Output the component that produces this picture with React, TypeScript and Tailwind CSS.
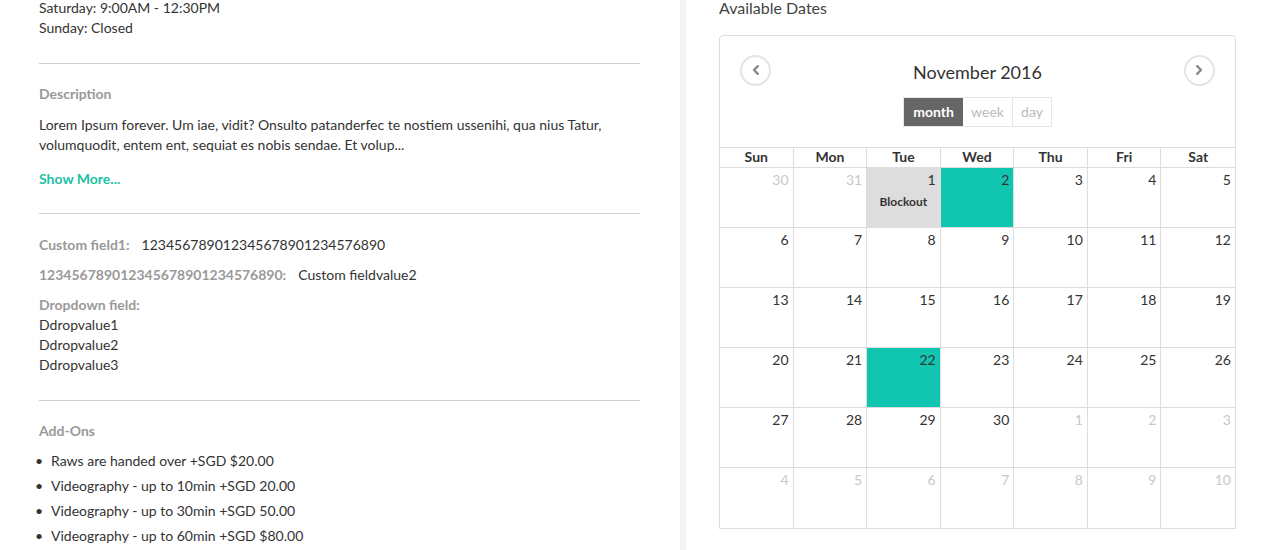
import React from "react";

type Cell = { n: number; other?: boolean; teal?: boolean; block?: boolean };

const rows: Cell[][] = [
  [{ n: 30, other: true }, { n: 31, other: true }, { n: 1, block: true }, { n: 2, teal: true }, { n: 3 }, { n: 4 }, { n: 5 }],
  [{ n: 6 }, { n: 7 }, { n: 8 }, { n: 9 }, { n: 10 }, { n: 11 }, { n: 12 }],
  [{ n: 13 }, { n: 14 }, { n: 15 }, { n: 16 }, { n: 17 }, { n: 18 }, { n: 19 }],
  [{ n: 20 }, { n: 21 }, { n: 22, teal: true }, { n: 23 }, { n: 24 }, { n: 25 }, { n: 26 }],
  [{ n: 27 }, { n: 28 }, { n: 29 }, { n: 30 }, { n: 1, other: true }, { n: 2, other: true }, { n: 3, other: true }],
  [{ n: 4, other: true }, { n: 5, other: true }, { n: 6, other: true }, { n: 7, other: true }, { n: 8, other: true }, { n: 9, other: true }, { n: 10, other: true }],
];

const days = ["Sun", "Mon", "Tue", "Wed", "Thu", "Fri", "Sat"];

const addons = [
  "Raws are handed over +SGD $20.00",
  "Videography - up to 10min +SGD 20.00",
  "Videography - up to 30min +SGD 50.00",
  "Videography - up to 60min +SGD $80.00",
];

function Chevron({ dir }: { dir: "left" | "right" }) {
  return (
    <svg width="12" height="12" viewBox="0 0 12 12">
      {dir === "left" ? (
        <path d="M7.8 2.2 L4 6 L7.8 9.8" fill="none" stroke="#8a8a8a" strokeWidth="2.4" strokeLinecap="round" strokeLinejoin="round" />
      ) : (
        <path d="M4.2 2.2 L8 6 L4.2 9.8" fill="none" stroke="#8a8a8a" strokeWidth="2.4" strokeLinecap="round" strokeLinejoin="round" />
      )}
    </svg>
  );
}

export default function App() {
  return (
    <div className="flex w-[1280px] h-[550px] overflow-hidden bg-white text-[14px] leading-[20px] text-[#333]" style={{ fontFamily: "Lato, 'Open Sans', sans-serif" }}>
      {/* Left column */}
      <div className="w-[680px] shrink-0 pl-[39px] pr-[40px]">
        <div className="-mt-[2px]">
          <div>Saturday: 9:00AM - 12:30PM</div>
          <div>Sunday: Closed</div>
        </div>
        <div className="mt-[25px] border-t border-[#cfcfcf]" />
        <div className="mt-[20px] font-bold text-[#999]">Description</div>
        <p className="mt-[11px] leading-[19.5px]">
          Lorem Ipsum forever. Um iae, vidit? Onsulto patanderfec te nostiem ussenihi, qua nius Tatur, volumquodit, entem ent, sequiat es nobis sendae. Et volup...
        </p>
        <div className="mt-[15px] font-bold text-[#1cc2a4]">Show More...</div>
        <div className="mt-[24px] border-t border-[#cfcfcf]" />
        <div className="mt-[21px]">
          <span className="font-bold text-[#999] mr-[12px]">Custom field1:</span>
          <span>123456789012345678901234576890</span>
        </div>
        <div className="mt-[10px]">
          <span className="font-bold text-[#999] mr-[12px]">123456789012345678901234576890:</span>
          <span>Custom fieldvalue2</span>
        </div>
        <div className="mt-[10px] font-bold text-[#999]">Dropdown field:</div>
        <div>Ddropvalue1</div>
        <div>Ddropvalue2</div>
        <div>Ddropvalue3</div>
        <div className="mt-[25px] border-t border-[#cfcfcf]" />
        <div className="mt-[20px] font-bold text-[#999]">Add-Ons</div>
        <ul className="mt-[10px] -ml-[4px]">
          {addons.map((a) => (
            <li key={a} className="mb-[5px] flex">
              <span className="w-[16px] shrink-0 text-[14px]">•</span>
              <span>{a}</span>
            </li>
          ))}
        </ul>
      </div>

      {/* Divider strip */}
      <div className="w-[6px] shrink-0 bg-[#f2f4f4]" />

      {/* Right column */}
      <div className="pl-[33px]">
        <div className="text-[16px] leading-[16px] text-[#444]">Available Dates</div>
        <div className="mt-[19px] w-[517px] border border-[#ddd] rounded-t-[4px]">
          <div className="h-[111px] px-[20px] pt-[18px]">
            <div className="flex items-center justify-between h-[32px]">
              <div className="w-[31px] h-[31px] rounded-full border-2 border-[#e4e4e4] flex items-center justify-center">
                <Chevron dir="left" />
              </div>
              <div className="text-[18px] leading-[24px] text-[#333] mt-[4px]">November 2016</div>
              <div className="w-[31px] h-[31px] rounded-full border-2 border-[#e4e4e4] flex items-center justify-center">
                <Chevron dir="right" />
              </div>
            </div>
            <div className="mt-[11px] flex justify-center">
              <div className="flex h-[30px] border border-[#e6e6e6]">
                <div className="w-[59px] bg-[#666] text-white font-bold flex items-center justify-center text-[14px]">month</div>
                <div className="w-[50px] text-[#bbb] flex items-center justify-center border-r border-[#e6e6e6]">week</div>
                <div className="w-[38px] text-[#bbb] flex items-center justify-center">day</div>
              </div>
            </div>
          </div>
          <div className="grid grid-cols-7 border-t border-[#ddd]">
            {days.map((d, i) => (
              <div key={d} className={`h-[20px] leading-[18px] text-center font-bold border-b border-[#ddd] ${i < 6 ? "border-r" : ""}`}>
                {d}
              </div>
            ))}
            {rows.map((r, ri) =>
              r.map((c, ci) => (
                <div
                  key={`${ri}-${ci}`}
                  className={`h-[60px] border-[#ddd] ${ri < 5 ? "border-b" : ""} ${ci < 6 ? "border-r" : ""} ${c.teal ? "bg-[#10c6b0]" : c.block ? "bg-[#dddddd]" : ""}`}
                >
                  <div className={`text-right pr-[4px] pt-[2px] ${c.other ? "text-[#c8c8c8]" : "text-[#333]"}`}>{c.n}</div>
                  {c.block && <div className="mt-[4px] text-center text-[12px] leading-[16px] font-bold text-[#333]">Blockout</div>}
                </div>
              ))
            )}
          </div>
        </div>
      </div>
    </div>
  );
}
